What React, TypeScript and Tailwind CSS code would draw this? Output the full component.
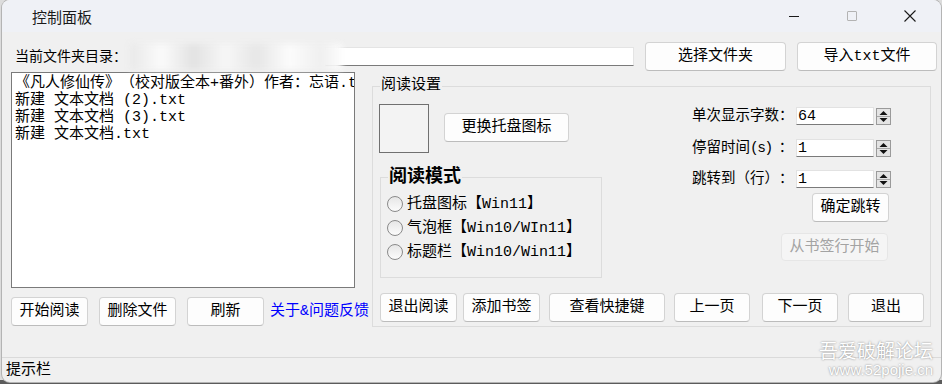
import React from "react";
import clsx from "clsx";

const Btn = ({
  className,
  children,
  disabled,
}: {
  className?: string;
  children: React.ReactNode;
  disabled?: boolean;
}) => (
  <button
    className={clsx(
      "flex shrink-0 items-center justify-center rounded-[4px] border text-[15px] leading-none",
      disabled
        ? "border-[#e6e6e6] bg-[#f5f5f5] text-[#a3a3a3]"
        : "border-[#d3d3d3] border-b-[#bcbcbc] bg-[#fdfdfd] text-black",
      className
    )}
  >
    {children}
  </button>
);

const Spin = () => (
  <svg width="15" height="17" viewBox="0 0 15 17" className="ml-[2px] shrink-0">
    <rect x="0.5" y="0.5" width="14" height="16" fill="#e4e4e4" stroke="#9a9a9a" />
    <line x1="1" y1="8.5" x2="14" y2="8.5" stroke="#a8a8a8" />
    <path d="M3.5 7 L7.5 3 L11.5 7Z" fill="#111" />
    <path d="M3.5 10 L7.5 14 L11.5 10Z" fill="#111" />
  </svg>
);

const SpinRow = ({
  label,
  value,
  className,
}: {
  label: React.ReactNode;
  value: string;
  className?: string;
}) => (
  <div className={clsx("flex h-[18px] items-center", className)}>
    <span className="w-[104px] shrink-0 whitespace-nowrap text-[14.5px] leading-[18px]">{label}</span>
    <div className="flex h-[18px] w-[78px] shrink-0 items-center border border-[#e2e2e2] border-b-[#7a7a7a] bg-white pl-[1px] text-[15px] leading-none">
      {value}
    </div>
    <Spin />
  </div>
);

const Radio = ({ label }: { label: string }) => (
  <div className="flex h-[24px] items-center gap-[4px]">
    <div className="h-[16px] w-[16px] rounded-full border border-[#8a8a8a] bg-[linear-gradient(#e6e6e6,#fbfbfb)]" />
    <span className="whitespace-nowrap text-[15px] leading-none">{label}</span>
  </div>
);

const files = [
  "《凡人修仙传》（校对版全本+番外）作者：忘语.txt",
  "新建 文本文档 (2).txt",
  "新建 文本文档 (3).txt",
  "新建 文本文档.txt",
];

export default function App() {
  return (
    <div className="h-[384px] w-[942px] overflow-hidden bg-[linear-gradient(to_bottom,#dcdcdc_0%,#dcdcdc_99%,#5c5c5c_99%)] font-['Liberation_Mono','Noto_Sans_CJK_SC',monospace] text-black [text-spacing-trim:space-all]">
      <div className="relative ml-[2px] flex h-[382px] w-[939px] flex-col overflow-hidden rounded-[8px] bg-[#f0f0f0] shadow-[0_0_0_1px_#b4b4b4]">
        {/* title bar */}
        <div className="flex h-[32px] shrink-0 items-center bg-[#eff1f6]">
          <span className="pl-[30px] font-['Noto_Sans_CJK_SC',sans-serif] text-[15px] leading-none text-[#1a1a1a]">
            控制面板
          </span>
          <div className="ml-auto mr-[2px] flex h-full">
            <div className="flex w-[58px] items-center justify-center">
              <div className="h-px w-[10px] bg-[#1a1a1a]" />
            </div>
            <div className="flex w-[58px] items-center justify-center">
              <div className="h-[10px] w-[10px] rounded-[1px] border border-[#b3b3b3]" />
            </div>
            <div className="flex w-[58px] items-center justify-center">
              <svg width="12" height="12" viewBox="0 0 12 12">
                <path d="M0.5 0.5 L11.5 11.5 M11.5 0.5 L0.5 11.5" stroke="#1a1a1a" strokeWidth="1.1" />
              </svg>
            </div>
          </div>
        </div>

        {/* folder row */}
        <div className="relative mt-[10px] flex h-[29px] shrink-0 items-center pl-[13px]">
          <span className="w-[310px] text-[14px] leading-none">当前文件夹目录：</span>
          <div className="h-[19px] w-[309px] border border-[#e4e4e4] border-b-[#7a7a7a] bg-white" />
          <Btn className="ml-[11px] h-[29px] w-[141px]">选择文件夹</Btn>
          <Btn className="ml-[11px] h-[29px] w-[140px]">导入txt文件</Btn>
          <div className="absolute left-[128px] top-[2px] h-[26px] w-[212px] bg-[linear-gradient(90deg,#e8e8e8,#fbfbfb_15%,#e2e2e2_30%,#f7f7f7_45%,#e6e6e6_60%,#fcfcfc_75%,#efefef_90%,#fdfdfd)] blur-[3px]" />
        </div>

        {/* main */}
        <div className="mt-[1px] flex h-[285px] shrink-0 pl-[9px]">
          <div className="flex w-[361px] shrink-0 flex-col">
            <div className="h-[216px] w-[344px] overflow-hidden border border-[#7a7a7a] bg-white pl-[3px] pt-[2px]">
              {files.map((f) => (
                <div key={f} className="whitespace-nowrap text-[15px] leading-[17px]">
                  {f}
                </div>
              ))}
            </div>
            <div className="mt-[9px] flex items-center">
              <Btn className="h-[29px] w-[77px]">开始阅读</Btn>
              <Btn className="ml-[11px] h-[29px] w-[77px]">删除文件</Btn>
              <Btn className="ml-[11px] h-[29px] w-[77px]">刷新</Btn>
              <span className="ml-[6px] whitespace-nowrap text-[15px] leading-none text-[#0000ff]">关于&问题反馈</span>
            </div>
          </div>

          {/* reading settings group */}
          <div className="relative mt-[14px] flex h-[241px] w-[559px] shrink-0 flex-col border border-[#dcdcdc]">
            <span className="absolute -top-[10px] left-[7px] bg-[#f0f0f0] px-[1px] text-[15px] leading-[18px]">阅读设置</span>
            <div className="flex">
              <div className="flex flex-col pl-[6px] pt-[17px]">
                <div className="flex">
                  <div className="h-[49px] w-[50px] border border-[#707070] bg-[#f3f3f3]" />
                  <Btn className="ml-[15px] mt-[9px] h-[29px] w-[125px]">更换托盘图标</Btn>
                </div>
                <div className="relative ml-[1px] mt-[24px] h-[101px] w-[222px] border border-[#dcdcdc] pl-[6px] pt-[14px]">
                  <span className="absolute -top-[12px] left-[7px] bg-[#f0f0f0] px-[1px] text-[18px] font-bold leading-[22px]">阅读模式</span>
                  <Radio label="托盘图标【Win11】" />
                  <Radio label="气泡框【Win10/WIn11】" />
                  <Radio label="标题栏【Win10/Win11】" />
                </div>
              </div>
              <div className="ml-auto mr-[39px] flex w-[199px] flex-col pt-[20px]">
                <SpinRow label="单次显示字数：" value="64" />
                <SpinRow
                  label={
                    <>
                      停留时间<span className="tracking-[-1.5px]">(s) </span>：
                    </>
                  }
                  value="1"
                  className="mt-[14px]"
                />
                <SpinRow label="跳转到（行）：" value="1" className="mt-[13px]" />
                <Btn className="mr-[2px] mt-[5px] h-[29px] w-[77px] self-end">确定跳转</Btn>
                <Btn disabled className="mr-[3px] mt-[11px] h-[28px] w-[107px] self-end">从书签行开始</Btn>
              </div>
            </div>
            <div className="mt-auto flex pb-[4px] pl-[7px]">
              <Btn className="h-[29px] w-[77px]">退出阅读</Btn>
              <Btn className="ml-[6px] h-[29px] w-[77px]">添加书签</Btn>
              <Btn className="ml-[9px] h-[29px] w-[116px]">查看快捷键</Btn>
              <Btn className="ml-[9px] h-[29px] w-[76px]">上一页</Btn>
              <Btn className="ml-[12px] h-[29px] w-[76px]">下一页</Btn>
              <Btn className="ml-[10px] h-[29px] w-[76px]">退出</Btn>
            </div>
          </div>
        </div>

        {/* status bar */}
        <div className="flex h-[25px] shrink-0 items-center border-t border-[#dadada] pl-[4px] text-[15px] leading-none">
          提示栏
        </div>

        {/* watermark */}
        <div className="absolute bottom-[5px] right-[8px] flex flex-col items-end gap-[3px] font-['Noto_Sans_CJK_SC',sans-serif] text-white [text-shadow:0_0_2px_#7a7a7a]">
          <span className="text-[19px] leading-[19px]">吾爱破解论坛</span>
          <span className="font-['Liberation_Sans',sans-serif] text-[15px] leading-[15px]">www.52pojie.cn</span>
        </div>
      </div>
    </div>
  );
}
